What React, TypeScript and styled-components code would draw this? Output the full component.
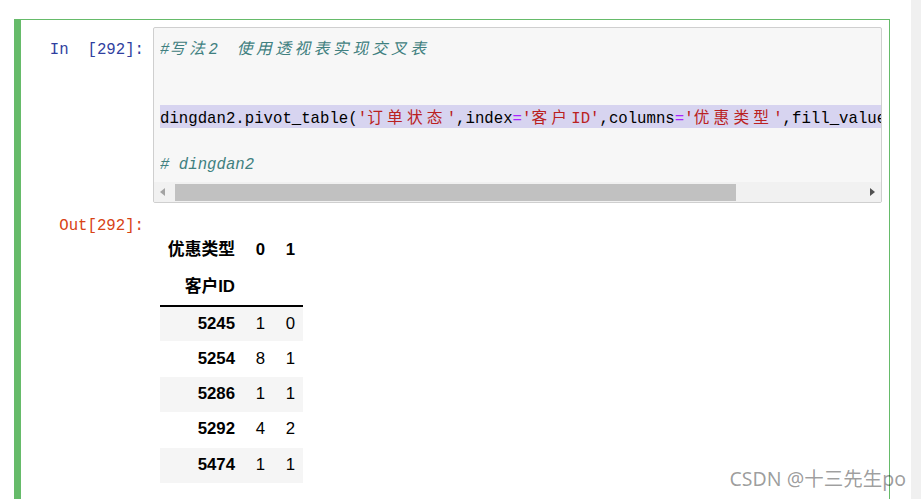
import styled, { createGlobalStyle } from "styled-components";

const GlobalStyle = createGlobalStyle`
    *{
        box-sizing: border-box;
    }
    body{
        margin: 0;
        background: #fff;
    }
`

const Page = styled.div`
    display: flex;
    width: 921px;
    height: 499px;
    position: relative;
    overflow: hidden;
    background: #fff;
`

const Main = styled.main`
    flex: 1;
    min-width: 0;
    padding: 19px 21px 0 14px;
`

const PageScroll = styled.div`
    width: 10px;
    flex-shrink: 0;
    background: #f0f0f0;
`

const Cell = styled.section`
    height: 100%;
    border: 1px solid #66bb6a;
    border-left-width: 7px;
    border-bottom: none;
    padding: 7px 7px 0 0;
`

const Row = styled.div<{ $top?: number }>`
    display: flex;
    align-items: flex-start;
    padding-top: ${p => p.$top ?? 0}px;
`

const Prompt = styled.div<{ $out?: boolean }>`
    width: 132px;
    flex-shrink: 0;
    padding: ${p => (p.$out ? 0 : 12)}px 9px 0 0;
    text-align: right;
    white-space: pre;
    font-family: "Liberation Mono", monospace;
    font-size: 15.7px;
    line-height: 23px;
    color: ${p => (p.$out ? "#D84315" : "#303F9F")};
`

const InputBox = styled.div`
    flex: 1;
    min-width: 0;
    border: 1px solid #cfcfcf;
    border-radius: 2px;
    background: #f7f7f7;
    overflow: hidden;
`

const Code = styled.pre`
    margin: 0;
    padding: 8px 0 8px 6px;
    overflow: hidden;
    font-family: "Liberation Mono", "Noto Sans CJK SC", monospace;
    font-size: 15.7px;
    color: #000;
`

const Line = styled.div<{ $hl?: boolean }>`
    height: 23px;
    line-height: 28px;
    white-space: pre;
    overflow: hidden;
    background: ${p => (p.$hl ? "#d7d4f0" : "transparent")};
`

const Comment = styled.span`
    color: #408080;
    font-style: italic;
`

const Str = styled.span`
    color: #BA2121;
`

const Op = styled.span`
    color: #AA22FF;
`

// CJK glyphs take about two mono cells in the original font
const Wide = styled.span<{ $ls?: number }>`
    letter-spacing: ${p => p.$ls ?? 4.2}px;
`

const HScroll = styled.div`
    display: flex;
    align-items: center;
    height: 20px;
    background: #f1f1f1;
`

const ArrowBtn = styled.div<{ $dir: "left" | "right" }>`
    width: 17px;
    height: 17px;
    display: flex;
    align-items: center;
    justify-content: center;

    &::before{
        content: "";
        width: 0;
        height: 0;
        border-top: 4.5px solid transparent;
        border-bottom: 4.5px solid transparent;
        ${p => p.$dir === "left"
            ? "border-right: 5px solid #a3a3a3;"
            : "border-left: 5px solid #505050;"}
    }
`

const Thumb = styled.div`
    width: 561px;
    height: 17px;
    margin-left: 4px;
    background: #c1c1c1;
`

const Spacer = styled.div`
    flex: 1;
`

const OutputBody = styled.div`
    padding: 17px 0 0 7px;
`

const Table = styled.table`
    border-collapse: collapse;
    table-layout: fixed;
    font-family: "Liberation Sans", "Noto Sans CJK SC", Arial, sans-serif;
    font-size: 16.8px;
    color: #000;

    thead{
        border-bottom: 2px solid #000;
    }

    tbody tr:nth-child(odd){
        background: #f5f5f5;
    }
`

const Th = styled.th<{ $w?: number; $h?: number }>`
    width: ${p => (p.$w ? `${p.$w}px` : "auto")};
    height: ${p => p.$h ?? 35.4}px;
    padding: 0 8px 0 0;
    text-align: right;
    font-weight: bold;
    line-height: 1;
`

const Td = styled.td`
    height: 35.4px;
    padding: 0 8px 0 0;
    text-align: right;
    line-height: 1;
`

const Watermark = styled.div`
    position: absolute;
    right: 15px;
    bottom: 9px;
    font-family: "Noto Sans", "Noto Sans CJK SC", sans-serif;
    font-size: 19.5px;
    line-height: 23px;
    color: rgba(0, 0, 0, 0.4);
`

const rows: [string, number, number][] = [
    ["5245", 1, 0],
    ["5254", 8, 1],
    ["5286", 1, 1],
    ["5292", 4, 2],
    ["5474", 1, 1],
]

export default function App() {
    return (
        <Page>
            <GlobalStyle />
            <Main>
                <Cell>
                    <Row>
                        <Prompt>{"In  [292]:"}</Prompt>
                        <InputBox>
                            <Code>
                                <Line>
                                    <Comment>#<Wide $ls={3.8}>写法</Wide>2  <Wide $ls={3.6}>使用透视表实现交叉表</Wide></Comment>
                                </Line>
                                <Line />
                                <Line />
                                <Line $hl>
                                    dingdan2.pivot_table(<Str>'<Wide>订单状态</Wide>'</Str>,index<Op>=</Op><Str>'<Wide>客户</Wide>ID'</Str>,columns<Op>=</Op><Str>'<Wide>优惠类型</Wide>'</Str>,fill_value<Op>=</Op>0,aggfunc<Op>=</Op><Str>'count'</Str>)
                                </Line>
                                <Line />
                                <Line>
                                    <Comment># dingdan2</Comment>
                                </Line>
                            </Code>
                            <HScroll>
                                <ArrowBtn $dir="left" />
                                <Thumb />
                                <Spacer />
                                <ArrowBtn $dir="right" />
                            </HScroll>
                        </InputBox>
                    </Row>
                    <Row $top={12}>
                        <Prompt $out>Out[292]:</Prompt>
                        <OutputBody>
                            <Table>
                                <thead>
                                    <tr>
                                        <Th $w={83} $h={37}>优惠类型</Th>
                                        <Th $w={30} $h={37}>0</Th>
                                        <Th $w={30} $h={37}>1</Th>
                                    </tr>
                                    <tr>
                                        <Th $h={37}>客户ID</Th>
                                        <Th $h={37} />
                                        <Th $h={37} />
                                    </tr>
                                </thead>
                                <tbody>
                                    {rows.map(([id, a, b]) => (
                                        <tr key={id}>
                                            <Th>{id}</Th>
                                            <Td>{a}</Td>
                                            <Td>{b}</Td>
                                        </tr>
                                    ))}
                                </tbody>
                            </Table>
                        </OutputBody>
                    </Row>
                </Cell>
            </Main>
            <PageScroll />
            <Watermark>CSDN @十三先生po</Watermark>
        </Page>
    )
}
